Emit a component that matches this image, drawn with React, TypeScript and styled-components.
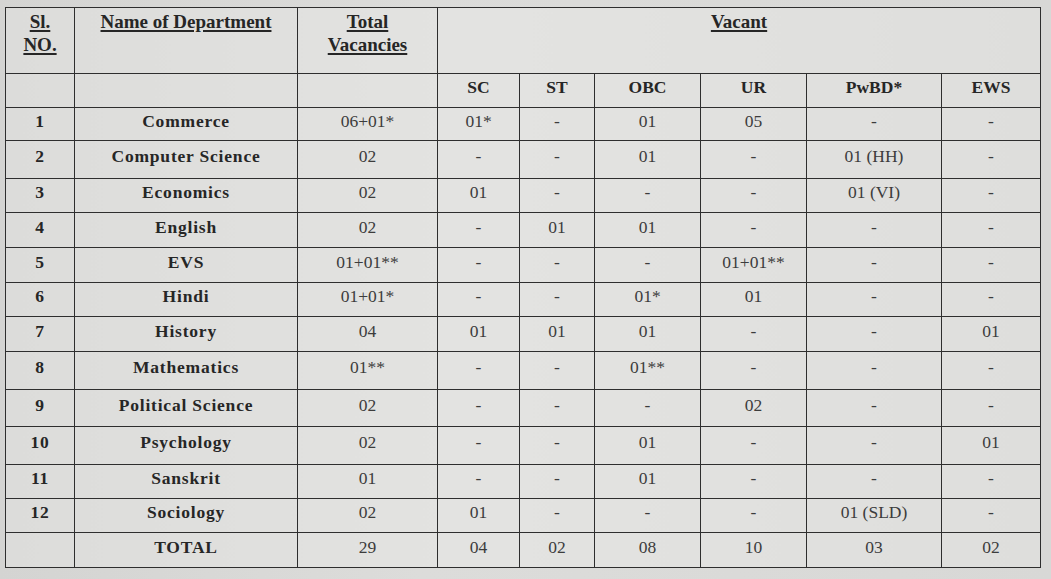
import React from "react";
import styled, { createGlobalStyle } from "styled-components";

type Row = {
  no: string;
  dept: string;
  total: string;
  sc: string;
  st: string;
  obc: string;
  ur: string;
  pwbd: string;
  ews: string;
  h: number;
};

const rows: Row[] = [
  { no: "1", dept: "Commerce", total: "06+01*", sc: "01*", st: "-", obc: "01", ur: "05", pwbd: "-", ews: "-", h: 33 },
  { no: "2", dept: "Computer Science", total: "02", sc: "-", st: "-", obc: "01", ur: "-", pwbd: "01 (HH)", ews: "-", h: 38 },
  { no: "3", dept: "Economics", total: "02", sc: "01", st: "-", obc: "-", ur: "-", pwbd: "01 (VI)", ews: "-", h: 34 },
  { no: "4", dept: "English", total: "02", sc: "-", st: "01", obc: "01", ur: "-", pwbd: "-", ews: "-", h: 35 },
  { no: "5", dept: "EVS", total: "01+01**", sc: "-", st: "-", obc: "-", ur: "01+01**", pwbd: "-", ews: "-", h: 35 },
  { no: "6", dept: "Hindi", total: "01+01*", sc: "-", st: "-", obc: "01*", ur: "01", pwbd: "-", ews: "-", h: 34 },
  { no: "7", dept: "History", total: "04", sc: "01", st: "01", obc: "01", ur: "-", pwbd: "-", ews: "01", h: 35 },
  { no: "8", dept: "Mathematics", total: "01**", sc: "-", st: "-", obc: "01**", ur: "-", pwbd: "-", ews: "-", h: 38 },
  { no: "9", dept: "Political Science", total: "02", sc: "-", st: "-", obc: "-", ur: "02", pwbd: "-", ews: "-", h: 37 },
  { no: "10", dept: "Psychology", total: "02", sc: "-", st: "-", obc: "01", ur: "-", pwbd: "-", ews: "01", h: 38 },
  { no: "11", dept: "Sanskrit", total: "01", sc: "-", st: "-", obc: "01", ur: "-", pwbd: "-", ews: "-", h: 34 },
  { no: "12", dept: "Sociology", total: "02", sc: "01", st: "-", obc: "-", ur: "-", pwbd: "01 (SLD)", ews: "-", h: 34 },
];

const widths = [69, 223, 140, 82, 75, 106, 106, 135, 99];
const categories = ["SC", "ST", "OBC", "UR", "PwBD*", "EWS"];

const GlobalStyle = createGlobalStyle`
  body {
    margin: 0;
    background: #dadad8;
    font-family: "Liberation Serif", "Times New Roman", serif;
    color: #2a2a2a;
  }
`;

const Page = styled.div`
  width: 1051px;
  height: 579px;
  padding: 7px 0 0 5px;
  box-sizing: border-box;
  background: linear-gradient(90deg, #d4d4d2 0%, #dcdcda 40%, #d8d8d6 100%);
  overflow: hidden;
`;

const Table = styled.table`
  border-collapse: collapse;
  table-layout: fixed;
  width: 1035px;
  background: linear-gradient(90deg, #dcdcda 0%, #e3e3e1 45%, #dededc 100%);
`;

const HeadCell = styled.th`
  border: 1.5px solid #2e2e2e;
  height: 63px;
  padding: 2px 4px 0;
  vertical-align: top;
  text-align: center;
  font-size: 19px;
  font-weight: bold;
  line-height: 23px;
  color: #262626;

  span {
    text-decoration: underline;
    text-decoration-thickness: 1.5px;
    text-underline-offset: 2px;
  }
`;

const SubCell = styled.td`
  border: 1.5px solid #2e2e2e;
  height: 27px;
  padding: 0 0 6px;
  text-align: center;
  vertical-align: middle;
  font-size: 17.5px;
  font-weight: bold;
  color: #262626;
`;

const Cell = styled.td<{ $bold?: boolean }>`
  border: 1.5px solid #2e2e2e;
  padding: 0 0 6px;
  text-align: center;
  vertical-align: middle;
  font-size: ${(p) => (p.$bold ? "17.5px" : "17.5px")};
  font-weight: ${(p) => (p.$bold ? "bold" : "normal")};
  letter-spacing: ${(p) => (p.$bold ? "0.8px" : "0")};
  color: ${(p) => (p.$bold ? "#262626" : "#3c3c3c")};
`;

const App: React.FC = () => {
  return (
    <Page>
      <GlobalStyle />
      <Table>
        <colgroup>
          {widths.map((w, i) => (
            <col key={i} style={{ width: w }} />
          ))}
        </colgroup>
        <thead>
          <tr>
            <HeadCell>
              <span>Sl.</span>
              <br />
              <span>NO.</span>
            </HeadCell>
            <HeadCell>
              <span>Name of Department</span>
            </HeadCell>
            <HeadCell>
              <span>Total</span>
              <br />
              <span>Vacancies</span>
            </HeadCell>
            <HeadCell colSpan={6}>
              <span>Vacant</span>
            </HeadCell>
          </tr>
          <tr>
            <SubCell />
            <SubCell />
            <SubCell />
            {categories.map((c) => (
              <SubCell key={c}>{c}</SubCell>
            ))}
          </tr>
        </thead>
        <tbody>
          {rows.map((r) => (
            <tr key={r.no} style={{ height: r.h }}>
              <Cell $bold>{r.no}</Cell>
              <Cell $bold>{r.dept}</Cell>
              <Cell>{r.total}</Cell>
              <Cell>{r.sc}</Cell>
              <Cell>{r.st}</Cell>
              <Cell>{r.obc}</Cell>
              <Cell>{r.ur}</Cell>
              <Cell>{r.pwbd}</Cell>
              <Cell>{r.ews}</Cell>
            </tr>
          ))}
          <tr style={{ height: 35 }}>
            <Cell />
            <Cell $bold>TOTAL</Cell>
            <Cell>29</Cell>
            <Cell>04</Cell>
            <Cell>02</Cell>
            <Cell>08</Cell>
            <Cell>10</Cell>
            <Cell>03</Cell>
            <Cell>02</Cell>
          </tr>
        </tbody>
      </Table>
    </Page>
  );
};

export default App;
